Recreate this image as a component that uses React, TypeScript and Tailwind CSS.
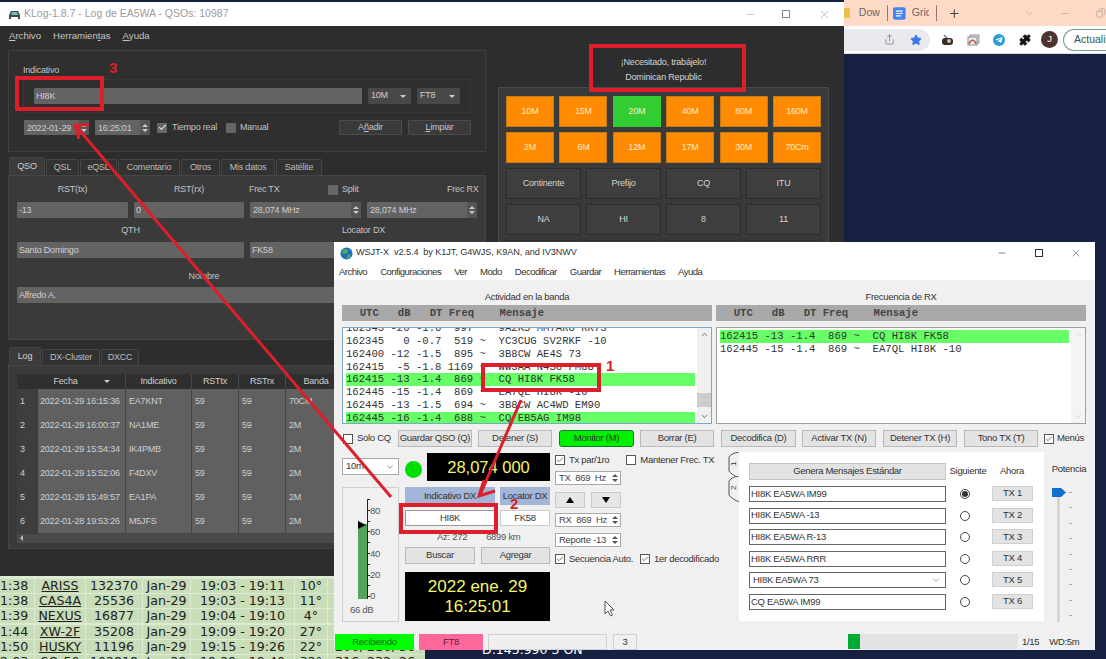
import type { ReactNode } from "react";
import { Check, ChevronDown, ChevronUp, Minus, Plus, Puzzle, Star, Share, X, Copy } from "lucide-react";
import { FaTelegramPlane } from "react-icons/fa";

const sans = "font-['Liberation_Sans',Arial,sans-serif]";
const mono = "font-['Liberation_Mono','Courier_New',monospace]";

const bands = ["10M", "15M", "20M", "40M", "80M", "160M", "2M", "6M", "12M", "17M", "30M", "70Cm"];
const infoCells = ["Continente", "Prefijo", "CQ", "ITU", "NA", "HI", "8", "11", "", "", "", ""];

const logRows = [
  ["1", "2022-01-29 16:15:36", "EA7KNT", "59", "59", "70CM"],
  ["2", "2022-01-29 16:00:37", "NA1ME", "59", "59", "2M"],
  ["3", "2022-01-29 15:54:34", "IK4PMB", "59", "59", "2M"],
  ["4", "2022-01-29 15:52:06", "F4DXV", "59", "59", "2M"],
  ["5", "2022-01-29 15:49:57", "EA1PA", "59", "59", "2M"],
  ["6", "2022-01-28 19:53:26", "M5JFS", "59", "59", "2M"],
];

const passes = [
  ["1:38", "ARISS", "132370", "Jan-29", "19:03 - 19:11", "10°", ""],
  ["1:38", "CAS4A", "25536", "Jan-29", "19:03 - 19:13", "11°", ""],
  ["1:39", "NEXUS", "16877", "Jan-29", "19:04 - 19:10", "4°", ""],
  ["1:44", "XW-2F", "35208", "Jan-29", "19:09 - 19:20", "27°", ""],
  ["1:50", "HUSKY", "11196", "Jan-29", "19:15 - 19:26", "22°", "206, 216, 56"],
  ["2:03", "SO-50", "102818", "Jan-29", "19:29 - 19:40", "32°", "316, 232, 26"],
];

const activity = [
  { t: "162345 -20 -1.6  997 ~  9A2K5 MM7ARO RR73" },
  { t: "162345   0 -0.7  519 ~  YC3CUG SV2RKF -10" },
  { t: "162400 -12 -1.5  895 ~  3B8CW AE4S 73" },
  { t: "162415  -5 -1.8 1169 ~  WW3AA N4SG FM88" },
  { t: "162415 -13 -1.4  869 ~  CQ HI8K FK58", cq: true },
  { t: "162445 -15 -1.4  869 ~  EA7QL HI8K -10" },
  { t: "162445 -13 -1.5  694 ~  3B8CW AC4WD EM90" },
  { t: "162445 -16 -1.4  688 ~  CQ EB5AG IM98", cq: true },
];

const rxActivity = [
  { t: "162415 -13 -1.4  869 ~  CQ HI8K FK58", cq: true },
  { t: "162445 -15 -1.4  869 ~  EA7QL HI8K -10" },
];

const txMessages = ["HI8K EA5WA IM99", "HI8K EA5WA -13", "HI8K EA5WA R-13", "HI8K EA5WA RRR", "HI8K EA5WA 73", "CQ EA5WA IM99"];

function DarkField({ className = "", children }: { className?: string; children?: ReactNode }) {
  return (
    <div className={`h-[16px] shrink-0 rounded-[1px] bg-[#636363] pl-[2px] leading-[16px] text-[#cfcfcf] ${className}`}>
      {children}
    </div>
  );
}

function DarkSpin({ className = "", children }: { className?: string; children: ReactNode }) {
  return (
    <div className={`flex h-[16px] shrink-0 justify-between rounded-[1px] bg-[#636363] pl-[3px] leading-[16px] text-[#cfcfcf] ${className}`}>
      <span className="whitespace-nowrap">{children}</span>
      <span className="flex w-[10px] flex-col items-center justify-center gap-[2px] bg-[#555]">
        <span className="h-0 w-0 border-x-[3px] border-b-[3px] border-x-transparent border-b-[#ccc]" />
        <span className="h-0 w-0 border-x-[3px] border-t-[3px] border-x-transparent border-t-[#ccc]" />
      </span>
    </div>
  );
}

function DarkCombo({ label }: { label: string }) {
  return (
    <div className="flex h-[16px] w-[43px] shrink-0 items-center justify-between rounded-[1px] bg-[#484848] pl-[3px] pr-[5px] text-[#cfcfcf]">
      <span>{label}</span>
      <span className="h-0 w-0 border-x-[3px] border-t-[3px] border-x-transparent border-t-[#ccc]" />
    </div>
  );
}

function DarkCheck({ on }: { on?: boolean }) {
  return (
    <span className="flex h-[10px] w-[10px] shrink-0 items-center justify-center bg-[#666]">
      {on && <Check size={9} strokeWidth={3} color="#ddd" />}
    </span>
  );
}

function DarkTab({ w, active, children }: { w: string; active?: boolean; children: ReactNode }) {
  return (
    <div className={`${w} flex shrink-0 items-center justify-center rounded-t-[2px] border border-b-0 border-[#454545] ${active ? "h-[18px] bg-[#3b3b3b] text-[#d0d0d0]" : "h-[16px] bg-[#323232] text-[#bdbdbd]"}`}>
      {children}
    </div>
  );
}

function KLog() {
  return (
    <div className={`absolute left-0 top-[2px] flex h-[574px] w-[844px] flex-col overflow-hidden bg-[#2d2d2d] text-[9px] tracking-[-0.2px] ${sans}`}>
      <div className="flex h-[24px] shrink-0 items-center bg-white pl-[8px] text-[10.5px] tracking-normal text-[#9b9b9b]">
        <svg width="13" height="11" viewBox="0 0 13 11" className="mr-[3px]">
          <path d="M1 10V6l2-4h7l2 4v4h-2V8H3v2z" fill="#3d4d55" />
          <path d="M4 3h5l1 3H3z" fill="#7fb6b0" />
        </svg>
        <span>KLog-1.8.7 - Log de EA5WA - QSOs: 10987</span>
        <div className="ml-auto flex items-center text-[#8a8a8a]">
          <Minus size={11} strokeWidth={1} className="mr-[26px]" />
          <span className="mr-[28px] h-[8px] w-[8px] border border-[#8a8a8a]" />
          <X size={13} strokeWidth={1} className="mr-[13px]" />
        </div>
      </div>
      <div className="flex h-[20px] shrink-0 items-center gap-[12px] pl-[9px] text-[9.6px] tracking-normal text-[#c4c4c4]">
        <span><u>A</u>rchivo</span>
        <span>Herramien<u>t</u>as</span>
        <span><u>A</u>yuda</span>
      </div>
      <div className="flex min-h-0 flex-1">
        <div className="flex w-[489px] shrink-0 flex-col pl-[8px]">
          <div className="mt-[4px] h-[102px] w-[478px] border border-[#3f3f3f] bg-[#2f2f2f] pl-[14px]">
            <div className="mt-[13px] h-[12px] leading-[12px] text-[#c4c4c4]">Indicativo</div>
            <div className="mt-[3px] flex h-[34px] w-[448px] items-center gap-[6px] border border-[#383838] pl-[10px]">
              <DarkField className="w-[328px]">HI8K</DarkField>
              <DarkCombo label="10M" />
              <DarkCombo label="FT8" />
            </div>
            <div className="mt-[7px] flex h-[15px] items-center whitespace-nowrap text-[#c4c4c4]">
              <DarkSpin className="ml-[1px] !h-[15px] w-[65px]">2022-01-29</DarkSpin>
              <DarkSpin className="ml-[6px] !h-[15px] w-[55px]">16:25:01</DarkSpin>
              <span className="ml-[7px] flex w-[69px] items-center gap-[5px]"><DarkCheck on />Tiempo real</span>
              <span className="flex w-[113px] items-center gap-[4px]"><DarkCheck />Manual</span>
              <span className="flex h-[15px] w-[63px] items-center justify-center rounded-[1px] border border-[#4c4c4c] bg-[#3a3a3a]">A<u>ñ</u>adir</span>
              <span className="ml-[6px] flex h-[15px] w-[63px] items-center justify-center rounded-[1px] border border-[#4c4c4c] bg-[#3a3a3a]"><u>L</u>impiar</span>
            </div>
          </div>
          <div className="mt-[5px] flex h-[18px] items-end gap-[1px] pl-[1px]">
            <DarkTab w="w-[36px]" active>QSO</DarkTab>
            <DarkTab w="w-[33px]">QSL</DarkTab>
            <DarkTab w="w-[37px]">eQSL</DarkTab>
            <DarkTab w="w-[62px]">Comentario</DarkTab>
            <DarkTab w="w-[39px]">Otros</DarkTab>
            <DarkTab w="w-[54px]">Mis datos</DarkTab>
            <DarkTab w="w-[46px]">Satélite</DarkTab>
          </div>
          <div className="h-[165px] w-[478px] border border-[#454545] bg-[#3a3a3a] pl-[8px] text-[#c4c4c4]">
            <div className="mt-[8px] flex h-[12px] items-center whitespace-nowrap">
              <span className="w-[111px] text-center">RST(tx)</span>
              <span className="ml-[6px] w-[110px] text-center">RST(rx)</span>
              <span className="ml-[5px] w-[79px]">Frec TX</span>
              <span className="flex w-[119px] items-center gap-[4px]"><DarkCheck />Split</span>
              <span>Frec RX</span>
            </div>
            <div className="mt-[6px] flex gap-[6px]">
              <DarkField className="w-[111px]">-13</DarkField>
              <DarkField className="w-[110px]">0</DarkField>
              <DarkSpin className="w-[111px]">28,074 MHz</DarkSpin>
              <DarkSpin className="w-[110px]">28,074 MHz</DarkSpin>
            </div>
            <div className="mt-[7px] flex h-[12px] items-center">
              <span className="w-[227px] text-center">QTH</span>
              <span className="ml-[6px] w-[227px] text-center">Locator DX</span>
            </div>
            <div className="mt-[5px] flex gap-[6px]">
              <DarkField className="w-[227px]">Santo Domingo</DarkField>
              <DarkField className="w-[220px]">FK58</DarkField>
            </div>
            <div className="mt-[12px] h-[12px] w-[374px] text-center leading-[12px]">Nombre</div>
            <DarkField className="mt-[5px] w-[460px]">Alfredo A.</DarkField>
          </div>
          <div className="mt-[7px] flex h-[18px] items-end gap-[1px] pl-[1px]">
            <DarkTab w="w-[32px]" active>Log</DarkTab>
            <DarkTab w="w-[58px]">DX-Cluster</DarkTab>
            <DarkTab w="w-[38px]">DXCC</DarkTab>
          </div>
          <div className="h-[184px] w-[478px] border border-[#454545] bg-[#3a3a3a] pl-[8px] pt-[8px] text-[#cfcfcf]">
            <div className="grid grid-cols-[21px_88px_66px_47px_47px_60px] bg-[#2f2f2f]">
              <div className="h-[15px]" />
              <div className="flex h-[15px] items-center justify-center border-r border-[#4a4a4a] text-center">Fecha<span className="ml-[26px] h-0 w-0 border-x-[3px] border-t-[3px] border-x-transparent border-t-[#ccc]" /></div>
              <div className="border-r border-[#4a4a4a] text-center leading-[15px]">Indicativo</div>
              <div className="border-r border-[#4a4a4a] text-center leading-[15px]">RSTtx</div>
              <div className="border-r border-[#4a4a4a] text-center leading-[15px]">RSTrx</div>
              <div className="text-center leading-[15px]">Banda</div>
            </div>
            {logRows.map((r) => (
              <div key={r[0]} className="grid h-[24px] grid-cols-[21px_88px_66px_47px_47px_60px] leading-[24px]">
                <div className="border-b border-[#3a3a3a] bg-[#3e3e3e] pl-[3px]">{r[0]}</div>
                {r.slice(1).map((c, i) => (
                  <div key={i} className={`overflow-hidden whitespace-nowrap border-b border-r border-[#444] bg-[#606060] ${i === 0 ? "pl-[2px]" : "pl-[3px]"}`}>{c}</div>
                ))}
              </div>
            ))}
            <div className="flex h-[10px] items-center bg-[#4a4a4a] pl-[3px]">
              <span className="h-0 w-0 border-y-[3px] border-r-[3px] border-y-transparent border-r-[#bbb]" />
            </div>
          </div>
        </div>
        <div className="flex flex-col">
          <div className="mt-[10px] flex h-[27px] w-[349px] flex-col items-center justify-between leading-[12px] text-[#d4d4d4]">
            <span>¡Necesitado, trabájelo!</span>
            <span>Dominican Republic</span>
          </div>
          <div className="ml-[9px] mt-[4px] h-[170px] w-[331px] border border-[#4a4a4a] bg-[#3a3a3a] px-[7px] pt-[8px]">
            <div className="grid grid-cols-6 gap-x-[5.4px] gap-y-[5px]">
              {bands.map((b) => (
                <div key={b} className={`flex h-[31px] items-center justify-center pt-[1px] text-[#ffe9c0] ${b === "20M" ? "bg-[#32cd32]" : "border border-[#c87a12] bg-[#ff8c00]"}`}>{b}</div>
              ))}
            </div>
            <div className="mt-[5px] grid grid-cols-4 gap-x-[5px] gap-y-[5px]">
              {infoCells.map((c, i) => (
                <div key={i} className="flex h-[31px] items-center justify-center border border-[#2c2c2c] bg-[#3e3e3e] pt-[1px] text-[#d4d4d4]">{c}</div>
              ))}
            </div>
          </div>
        </div>
      </div>
    </div>
  );
}

function PassTable() {
  return (
    <div className="absolute left-0 top-[576px] h-[83px] w-[425px] overflow-hidden bg-[#dcebd2] pt-[3px] font-['DejaVu_Sans',sans-serif] text-[12.6px] leading-[14px] text-[#222]">
      {passes.map((p) => (
        <div key={p[1]} className="mb-[1.2px] flex h-[14px] gap-[1px] whitespace-nowrap">
          <div className="w-[34px] bg-[#c8ddb8]">{p[0]}</div>
          <div className="w-[50px] bg-[#c8ddb8] text-center underline">{p[1]}</div>
          <div className="w-[56px] bg-[#c8ddb8] text-center">{p[2]}</div>
          <div className="w-[47px] bg-[#c8ddb8] text-center">{p[3]}</div>
          <div className="w-[103px] bg-[#c8ddb8] text-center">{p[4]}</div>
          <div className="w-[32px] bg-[#c8ddb8] text-center">{p[5]}</div>
          <div className="w-[97px] bg-[#c8ddb8] pl-[7px]">{p[6]}</div>
        </div>
      ))}
    </div>
  );
}

function Browser() {
  return (
    <div className={`absolute left-[844px] top-0 w-[262px] ${sans}`}>
      <div className="flex h-[26px] items-center bg-[#fdd9c6] text-[10.5px] text-[#666]">
        <span className="h-[10px] w-[6px] bg-[#e9c04a]" />
        <span className="ml-[9px] w-[22px] overflow-hidden">Dow</span>
        <span className="ml-[7px] h-[16px] w-px bg-[#8a7a72]" />
        <svg width="13" height="13" viewBox="0 0 13 13" className="ml-[5px]">
          <rect width="13" height="13" rx="2" fill="#4285f4" />
          <path d="M3 4h7M3 6.5h7M3 9h5" stroke="#fff" strokeWidth="1.2" />
        </svg>
        <span className="ml-[6px] w-[18px] overflow-hidden">Grid</span>
        <span className="ml-[7px] h-[16px] w-px bg-[#8a7a72]" />
        <Plus size={13} strokeWidth={2} color="#444" className="ml-[11px]" />
        <ChevronDown size={11} strokeWidth={1} color="#999" className="ml-[63px]" />
        <Minus size={11} strokeWidth={1.2} color="#999" className="ml-[25px]" />
        <Copy size={10} strokeWidth={1} color="#777" className="ml-[26px] -scale-x-100" />
      </div>
      <div className="flex h-[28px] items-center border-b border-[#dadce0] bg-white">
        <div className="flex h-[22px] w-[86px] items-center rounded-r-[11px] bg-[#e8eaed]">
          <Share size={11} strokeWidth={1.4} color="#666" className="ml-[40px]" />
          <Star size={12} fill="#3b78e7" color="#3b78e7" className="ml-[15px]" />
        </div>
        <svg width="13" height="13" viewBox="0 0 13 13" className="ml-[11px]">
          <path d="M3 2l3 3" stroke="#777" strokeWidth="1.5" />
          <rect x="1" y="5" width="11" height="7" rx="3" fill="#3a2a22" />
          <circle cx="8" cy="8" r="2" fill="#c9c1bb" />
        </svg>
        <svg width="13" height="12" viewBox="0 0 13 12" className="ml-[13px]">
          <rect x="3" y="1" width="9" height="8" fill="#dcdcdc" stroke="#999" />
          <rect x="1" y="3" width="9" height="8" fill="#eee" stroke="#888" />
          <path d="M2 10c2-5 5-5 7 0" stroke="#c0574a" strokeWidth="1.5" fill="none" />
        </svg>
        <span className="ml-[13px] flex h-[12px] w-[12px] items-center justify-center rounded-full bg-[#259ed6]">
          <FaTelegramPlane size={8} color="#fff" />
        </span>
        <Puzzle size={12} fill="#111" color="#111" className="ml-[14px]" />
        <span className="ml-[10px] flex h-[17px] w-[17px] items-center justify-center rounded-full bg-[#4e342e] text-[9.5px] text-white">J</span>
        <span className="ml-[5px] flex h-[22px] flex-1 items-center overflow-hidden rounded-l-[11px] border border-r-0 border-[#7d9c8a] pl-[10px] text-[10.5px] text-[#30594a]">Actualiz</span>
      </div>
    </div>
  );
}

function ListBox({ rows, offset, frame }: { rows: { t: string; cq?: boolean }[]; offset: string; frame: string }) {
  return (
    <div className={`flex h-[97px] w-[370px] justify-between overflow-hidden border bg-white pl-[3px] text-[10.6px] leading-[12.85px] tracking-normal ${frame} ${mono}`}>
      <div className={`w-[349px] whitespace-pre text-[#333] ${offset}`}>
        {rows.map((r) => (
          <div key={r.t} className={`h-[12.85px] ${r.cq ? "bg-[#66ff66]" : ""}`}>{r.t}</div>
        ))}
      </div>
      {rows.length > 2 ? (
        <div className="flex w-[14px] flex-col items-center justify-between bg-[#f0f0f0] py-[2px] text-[#444]">
          <ChevronUp size={9} />
          <span className="mt-auto h-[14px] w-full bg-[#cdcdcd]" />
          <ChevronDown size={9} className="mt-[5px]" />
        </div>
      ) : (
        <div className="flex w-[14px] flex-col items-center justify-between bg-[#f4f4f4] py-[2px] text-[#c8c8c8]">
          <ChevronUp size={9} />
          <ChevronDown size={9} />
        </div>
      )}
    </div>
  );
}

function LightButton({ w, children, green }: { w: string; children: ReactNode; green?: boolean }) {
  return (
    <div className={`${w} flex h-[17px] shrink-0 items-center justify-center whitespace-nowrap text-[#333] ${green ? "rounded-[3px] border border-[#137a2c] bg-[#00f000]" : "border border-[#b9b9b9] bg-[#e3e3e3]"}`}>
      {children}
    </div>
  );
}

function LightCheck({ on }: { on?: boolean }) {
  return (
    <span className="flex h-[10px] w-[10px] shrink-0 items-center justify-center border border-[#555] bg-white">
      {on && <Check size={8} strokeWidth={2} color="#333" />}
    </span>
  );
}

function Spin({ label }: { label: string }) {
  return (
    <div className="flex h-[14px] w-[66px] items-center justify-between border border-[#a8a8a8] bg-white pl-[3px] text-[#444]">
      <span className="whitespace-pre">{label}</span>
      <span className="mr-[2px] flex flex-col gap-[2px]">
        <span className="h-0 w-0 border-x-[3px] border-b-[3px] border-x-transparent border-b-[#555]" />
        <span className="h-0 w-0 border-x-[3px] border-t-[3px] border-x-transparent border-t-[#555]" />
      </span>
    </div>
  );
}

function SideTab({ n }: { n: string }) {
  return (
    <div className="relative h-[24px] w-[11px]">
      <svg width="11" height="26" viewBox="0 0 11 26" className="block">
        <path d="M11 0C6 1 3 2 1 5v14c2 3 6 5 10 7" fill="#f0f0f0" stroke="#555" />
      </svg>
      <span className="absolute left-[2px] top-[7px] w-[8px] -rotate-90 text-center text-[8px] leading-[10px] text-[#333]">{n}</span>
    </div>
  );
}

function Meter() {
  return (
    <div className="mt-[12px] h-[135px] w-[57px] border border-[#d0d0d0] pl-[15px] text-[#555]">
      <div className="relative mt-[11px] h-[100px] w-[9px]">
        <div className="absolute bottom-0 left-0 h-[75px] w-[9px] bg-[#55a35b]" />
        <span className="absolute left-0 top-[22px] h-0 w-0 border-y-[4px] border-l-[8px] border-y-transparent border-l-black" />
        <div className="absolute -right-px top-0 h-[100px] w-px bg-[#222]" />
        {[80, 60, 40, 20, 0].map((v, i) => (
          <span key={v} className="absolute left-[12px] leading-[11px]" style={{ top: `${5.5 + i * 21.5 + (v === 0 ? -1 : 0)}px` }}>{v}</span>
        ))}
        {[0, 1, 2, 3, 4, 5, 6, 7, 8, 9].map((i) => (
          <span key={i} className="absolute left-[9px] h-px w-[3px] bg-[#222]" style={{ top: `${i * 10.8}px` }} />
        ))}
      </div>
      <div className="-ml-[8px] mt-[5px] leading-[12px]">66 dB</div>
    </div>
  );
}

function Wsjt() {
  return (
    <div className={`absolute left-[334px] top-[242px] flex h-[408px] w-[761px] flex-col bg-[#f0f0f0] text-[9.5px] tracking-[-0.3px] text-[#333] ${sans}`}>
      <div className="flex h-[22px] shrink-0 items-center bg-white pl-[6px] text-[9.2px] tracking-[-0.1px] text-[#333]">
        <svg width="13" height="13" viewBox="0 0 13 13" className="mr-[3px]">
          <circle cx="6.5" cy="6.5" r="6" fill="#1f6fb5" />
          <path d="M3 3c2-2 5-1 5 1S6 7 4 7 2 5 3 3zM8 8c2-1 3 0 2 2s-3 2-3 1 0-2 1-3z" fill="#4fae5a" />
        </svg>
        <span className="whitespace-pre">WSJT-X  v2.5.4  by K1JT, G4WJS, K9AN, and IV3NWV</span>
        <div className="ml-auto flex items-center text-[#333]">
          <Minus size={10} strokeWidth={1.5} className="mr-[28px]" />
          <span className="mr-[27px] h-[8px] w-[8px] border border-[#333]" />
          <X size={12} strokeWidth={1} className="mr-[13px]" />
        </div>
      </div>
      <div className="flex h-[16px] shrink-0 items-center gap-[13px] bg-white pl-[5px] text-[9.6px] tracking-[-0.55px] text-[#333]">
        <span>Archivo</span>
        <span>Configuraciones</span>
        <span>Ver</span>
        <span>Modo</span>
        <span>Decodificar</span>
        <span>Guardar</span>
        <span>Herramientas</span>
        <span>Ayuda</span>
      </div>
      <div className="flex gap-[4px] pl-[8px]">
        <div className="flex flex-col">
          <div className="mt-[10px] h-[15px] text-center leading-[13px]">Actividad en la banda</div>
          <div className={`h-[16px] w-[370px] whitespace-pre bg-[#a9a9a9] pl-[5px] text-[10.6px] font-bold leading-[16px] tracking-normal text-[#444] ${mono}`}>{"  UTC   dB   DT Freq    Mensaje"}</div>
          <div className="mt-[6px]">
            <ListBox rows={activity} offset="-mt-[6px]" frame="border-[#7ca7c9]" />
          </div>
        </div>
        <div className="flex flex-col">
          <div className="mt-[10px] h-[15px] text-center leading-[13px]">Frecuencia de RX</div>
          <div className={`h-[16px] w-[370px] whitespace-pre bg-[#a9a9a9] pl-[5px] text-[10.6px] font-bold leading-[16px] tracking-normal text-[#444] ${mono}`}>{"  UTC   dB   DT Freq    Mensaje"}</div>
          <div className="mt-[6px]">
            <ListBox rows={rxActivity} offset="mt-[2px]" frame="border-[#a0a0a0]" />
          </div>
        </div>
      </div>
      <div className="mt-[6px] flex h-[17px] items-center pl-[9px]">
        <LightCheck />
        <span className="ml-[4px] w-[41px]">Solo CQ</span>
        <LightButton w="w-[74px]">Guardar QSO (Q)</LightButton>
        <div className="ml-[6px]"><LightButton w="w-[74px]">Detener (S)</LightButton></div>
        <div className="ml-[7px]"><LightButton w="w-[75px]" green>Monitor (M)</LightButton></div>
        <div className="ml-[6px]"><LightButton w="w-[74px]">Borrar (E)</LightButton></div>
        <div className="ml-[7px]"><LightButton w="w-[75px]">Decodifica (D)</LightButton></div>
        <div className="ml-[6px]"><LightButton w="w-[74px]">Activar TX (N)</LightButton></div>
        <div className="ml-[7px]"><LightButton w="w-[74px]">Detener TX (H)</LightButton></div>
        <div className="ml-[7px]"><LightButton w="w-[74px]">Tono TX (T)</LightButton></div>
        <span className="ml-[6px]"><LightCheck on /></span>
        <span className="ml-[3px]">Menús</span>
      </div>
      <div className="mt-[5px] flex h-[182px] pl-[8px]">
        <div className="w-[57px]">
          <div className="mt-[6px] flex h-[17px] items-center justify-between border border-[#a8a8a8] bg-white px-[3px]">
            <span>10m</span>
            <ChevronDown size={10} strokeWidth={1.2} />
          </div>
          <Meter />
        </div>
        <div className="ml-[6px] w-[145px]">
          <div className="mt-[1px] flex h-[28px] items-center">
            <span className="mt-[5px] h-[17px] w-[17px] rounded-full bg-[#00e000]" />
            <div className="ml-[5px] flex h-[28px] w-[123px] items-center justify-center bg-black text-[16.5px] tracking-normal text-[#f5f56a]">28,074 000</div>
          </div>
          <div className="mt-[6px] flex h-[18px] gap-[5px]">
            <div className="flex w-[90px] items-center justify-center bg-[#a3b5d9]">Indicativo DX</div>
            <div className="flex w-[50px] items-center justify-center whitespace-nowrap bg-[#a3b5d9]">Locator DX</div>
          </div>
          <div className="mt-[5px] flex h-[16px] gap-[5px]">
            <div className="flex w-[90px] items-center justify-center border border-[#999] bg-white">HI8K</div>
            <div className="flex w-[50px] items-center justify-center border border-[#ccc] bg-white">FK58</div>
          </div>
          <div className="mt-[5px] flex h-[12px] items-center text-[#555]">
            <span className="ml-[32px]">Az: 272</span>
            <span className="ml-[19px]">6899 km</span>
          </div>
          <div className="mt-[4px] flex gap-[6px]">
            <LightButton w="w-[70px]">Buscar</LightButton>
            <LightButton w="w-[69px]">Agregar</LightButton>
          </div>
          <div className="mt-[8px] flex h-[49px] flex-col items-center justify-center bg-black text-[17px] leading-[20px] tracking-normal text-[#f5f56a]">
            <span>2022 ene. 29</span>
            <span>16:25:01</span>
          </div>
        </div>
        <div className="ml-[5px] w-[173px]">
          <div className="mt-[3px] flex h-[10px] items-center">
            <LightCheck on />
            <span className="ml-[4px]">Tx par/1ro</span>
            <span className="ml-[17px]"><LightCheck /></span>
            <span className="ml-[4px] whitespace-nowrap">Mantener Frec. TX</span>
          </div>
          <div className="mt-[6px]"><Spin label="TX  869  Hz" /></div>
          <div className="mt-[7px] flex h-[16px] gap-[6px]">
            <div className="flex w-[30px] items-center justify-center border border-[#c9c9c9] bg-[#e6e6e6]"><span className="h-0 w-0 border-x-[4px] border-b-[6px] border-x-transparent border-b-black" /></div>
            <div className="flex w-[30px] items-center justify-center border border-[#c9c9c9] bg-[#e6e6e6]"><span className="h-0 w-0 border-x-[4px] border-t-[6px] border-x-transparent border-t-black" /></div>
          </div>
          <div className="mt-[5px]"><Spin label="RX  869  Hz" /></div>
          <div className="mt-[6px]"><Spin label="Reporte -13" /></div>
          <div className="mt-[7px] flex h-[10px] items-center whitespace-nowrap">
            <LightCheck on />
            <span className="ml-[4px] w-[71px]">Secuencia Auto.</span>
            <LightCheck on />
            <span className="ml-[4px]">1er decodificado</span>
          </div>
        </div>
        <div className="flex h-[169px]">
          <div className="w-[11px]">
            <SideTab n="1" />
            <SideTab n="2" />
          </div>
          <div className="w-[305px] bg-white pl-[10px] pt-[11px]">
            <div className="flex h-[17px] items-center">
              <div className="flex h-[17px] w-[197px] items-center justify-center border border-[#c4c4c4] bg-[#e3e3e3]">Genera Mensajes Estándar</div>
              <span className="w-[44px] text-center">Siguiente</span>
              <span className="w-[44px] text-center">Ahora</span>
            </div>
            <div className="mt-[6px] grid grid-cols-[197px_38px_49px] gap-y-[5.6px]">
              {txMessages.map((m, i) => (
                <div key={m} className="contents">
                  <div className="flex h-[16px] items-center justify-between border border-[#666] bg-white pl-[1px] pr-[4px] text-[#333]">
                    <span className={i === 4 ? "pl-[2px]" : ""}>{m}</span>
                    {i === 4 && <ChevronDown size={10} strokeWidth={1} />}
                  </div>
                  <div className="flex items-center justify-center">
                    <span className="flex h-[10px] w-[10px] items-center justify-center rounded-full border border-[#444]">
                      {i === 0 && <span className="h-[6px] w-[6px] rounded-full bg-[#333]" />}
                    </span>
                  </div>
                  <div className="ml-[8px] flex h-[15px] w-[41px] items-center justify-center border border-[#d0d0d0] bg-[#e3e3e3]">TX {i + 1}</div>
                </div>
              ))}
            </div>
          </div>
        </div>
        <div className="ml-[7px] flex w-[36px] flex-col">
          <span className="mt-[11px] text-center leading-[12px]">Potencia</span>
          <div className="mt-[13px] flex h-[134px]">
            <div className="relative h-full w-[15px]">
              <div className="absolute left-[6px] top-0 h-full w-[3px] bg-[#d6d6d6]" />
              <svg width="15" height="9" viewBox="0 0 15 9" className="absolute left-0 top-0">
                <path d="M1 0h9l5 4.5L10 9H1z" fill="#0d6fd0" />
              </svg>
            </div>
            <div className="ml-[3px] flex h-[128px] flex-col justify-between pt-[4px]">
              {[0, 1, 2, 3, 4, 5, 6, 7, 8].map((i) => (
                <span key={i} className="h-px w-[3px] bg-[#aaa]" />
              ))}
            </div>
          </div>
        </div>
      </div>
      <div className="flex h-[16px] items-stretch pl-[1px]">
        <div className="flex w-[79px] items-center justify-center bg-[#00ff00] text-[#146b14]">Recibiendo</div>
        <div className="ml-[5px] flex w-[64px] items-center justify-center bg-[#ff6699] text-[#5a1b30]">FT8</div>
        <div className="ml-[5px] w-[119px] border border-[#d0d0d0] bg-[#efefef]" />
        <div className="ml-[6px] flex w-[24px] items-center justify-center border border-[#d0d0d0]">3</div>
        <div className="ml-[211px] h-[15px] w-[170px] bg-[#e3e3e3]">
          <div className="h-full w-[12px] bg-[#00aa33]" />
        </div>
        <span className="ml-[4px] leading-[16px]">1/15</span>
        <span className="ml-[10px] leading-[16px]">WD:5m</span>
      </div>
    </div>
  );
}

function Annotations() {
  return (
    <>
      <svg width="1106" height="659" viewBox="0 0 1106 659" className="pointer-events-none absolute left-0 top-0" fill="none" stroke="#dc1f2a">
        <rect x="17" y="78" width="85" height="31" strokeWidth="4" />
        <rect x="591" y="46" width="153" height="44" strokeWidth="4" />
        <rect x="483" y="365" width="116" height="25" strokeWidth="4" />
        <rect x="401" y="505" width="95" height="27" strokeWidth="4" />
        <path d="M75 125L391 497" strokeWidth="3" />
        <path d="M89 125L75 125L79 139" strokeWidth="3" />
        <path d="M521 400L480 495" strokeWidth="3" />
        <path d="M484 480L479 496L495 491" strokeWidth="3" />
      </svg>
      <span className={`absolute left-[109px] top-[60px] text-[15px] font-bold leading-[15px] text-[#dc1f2a] ${sans}`}>3</span>
      <span className={`absolute left-[606px] top-[358px] text-[15px] font-bold leading-[15px] text-[#dc1f2a] ${sans}`}>1</span>
      <span className={`absolute left-[510px] top-[496px] text-[15px] font-bold leading-[15px] text-[#dc1f2a] ${sans}`}>2</span>
      <svg width="12" height="17" viewBox="0 0 12 17" className="absolute left-[604px] top-[600px]">
        <path d="M1 1v13l3-3 2.5 5 2-1-2.5-5h4z" fill="#fff" stroke="#555" />
      </svg>
    </>
  );
}

export default function App() {
  return (
    <div className="relative h-[659px] w-[1106px] overflow-hidden bg-[#162142]">
      <Browser />
      <PassTable />
      <span className="absolute left-[482px] top-[641px] font-['DejaVu_Sans',sans-serif] text-[12.5px] text-white">D:145.990 3 ON</span>
      <KLog />
      <Wsjt />
      <Annotations />
    </div>
  );
}
